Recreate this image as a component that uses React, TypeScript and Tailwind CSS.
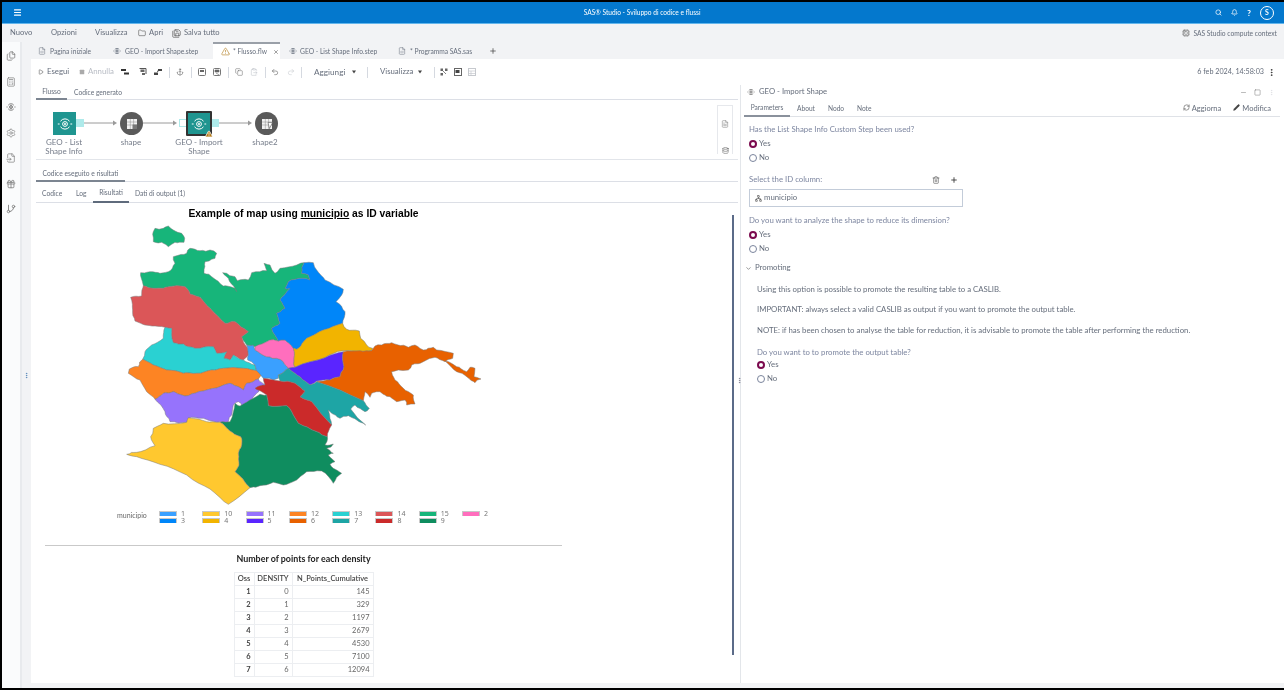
import React from "react";
import {
  Menu, Search, Bell, Folder, SaveAll, Cpu, Files, Calculator, Settings, FileInput, Gift, GitBranch,
  FileCode, TriangleAlert, X, Plus, Play, Square, Undo2, Redo2, ChevronDown, Copy, ClipboardPaste,
  Trash2, RefreshCw, Pencil, EllipsisVertical, Minus, Network, Anchor, FileText, Database,
} from "lucide-react";

const regions: { fill: string; pts: string }[] = [
  { fill: "#17B57A", pts: "128,88 135,70 160,70 175,63 190,75 215,85 224,100 222,112 195,112 175,125 155,112 130,110" },
  { fill: "#17B57A", pts: "92,203 120,200 150,205 175,200 195,175 190,155 230,145 240,130 270,137 300,135 320,145 315,160 285,170 282,205 305,215 340,243 375,250 380,260 375,250 355,220 338,203 350,205 375,215 382,227 415,225 425,203 470,197 462,175 480,180 495,205 510,190 560,180 582,173 575,205 595,210 600,225 575,220 535,230 525,250 540,250 510,285 525,310 500,325 510,355 485,370 505,408 480,405 435,425 410,420 395,395 415,380 375,350 345,355 300,310 270,277 240,267 225,245 200,242 160,250 130,250 100,242" },
  { fill: "#DB5658", pts: "100,242 95,273 62,277 68,315 75,348 105,360 135,363 165,367 185,370 190,413 220,417 255,430 310,425 320,445 350,440 342,460 360,465 370,450 380,455 400,465 415,450 413,430 395,395 415,380 375,350 345,355 300,310 270,277 240,267 225,245 200,242 160,250 130,250" },
  { fill: "#2AD1D2", pts: "185,370 190,413 220,417 255,430 310,425 320,445 350,440 342,460 360,465 370,450 400,465 435,480 440,497 400,490 340,490 305,495 260,505 220,505 170,495 130,480 98,463 105,440 125,420 160,400 165,367" },
  { fill: "#FD8423", pts: "98,463 130,480 170,495 220,505 260,505 305,495 340,490 400,490 440,497 458,507 445,522 410,535 400,555 385,545 360,535 330,545 280,558 235,572 215,570 190,560 160,565 135,583 110,560 90,525 55,505 58,492 85,485" },
  { fill: "#9673FC", pts: "135,583 160,565 190,560 215,570 235,572 280,558 330,545 360,535 385,545 400,555 410,535 445,522 465,540 450,548 440,565 415,595 395,603 385,590 370,600 365,630 355,650 320,652 280,640 235,640 230,652 180,650 165,620" },
  { fill: "#3AA0FF", pts: "410,420 430,420 435,435 470,455 500,460 520,470 535,490 505,510 505,520 490,525 460,520 440,497 435,480 413,465 415,450 413,430" },
  { fill: "#FF6EBD", pts: "435,425 480,405 505,408 525,405 550,430 552,470 555,487 535,490 520,470 500,460 470,455 435,435" },
  { fill: "#0086F9", pts: "582,173 610,173 620,195 645,225 700,253 695,270 678,290 705,320 698,355 640,375 590,400 565,430 550,430 525,405 505,408 485,370 510,355 500,325 525,310 510,285 540,250 525,250 535,230 575,220 600,225 595,210 575,205" },
  { fill: "#F2B400", pts: "698,355 710,373 748,378 752,400 770,420 788,430 785,437 700,437 645,458 555,487 552,470 550,430 565,430 590,400 640,375" },
  { fill: "#5A25FF", pts: "700,440 702,485 690,515 660,525 620,528 600,540 570,515 535,490 555,487 645,458" },
  { fill: "#E86100", pts: "700,440 750,437 785,437 795,423 815,420 845,413 865,420 895,427 915,420 940,435 970,427 980,435 1030,445 1028,460 1005,470 975,457 940,470 905,480 895,495 865,495 845,500 855,525 880,550 910,570 915,597 890,600 885,585 860,590 840,575 825,570 810,560 785,565 780,577 765,560 760,587 620,530 660,525 690,515 702,485" },
  { fill: "#E86100", pts: "1005,468 1040,485 1070,500 1080,487 1095,490 1092,515 1113,522 1095,533 1070,515 1040,500" },
  { fill: "#1EA5A5", pts: "505,510 535,490 570,515 600,540 620,530 760,587 778,610 765,620 735,600 722,612 767,660 740,645 715,632 690,640 665,625 655,615 665,660 605,590 570,575 585,558 555,535 510,528" },
  { fill: "#CB2A2A", pts: "435,550 465,540 460,520 510,528 555,535 585,558 570,575 605,590 665,660 652,695 620,680 565,655 545,620 530,602 475,602 470,570" },
  { fill: "#0F8D5F", pts: "330,652 360,650 375,595 390,603 430,580 450,568 470,570 475,602 530,602 545,620 565,655 620,680 652,695 645,720 670,717 650,730 670,745 655,750 675,770 660,778 670,790 695,805 670,835 635,798 590,800 560,825 520,840 490,832 450,842 420,848 375,800 387,780 385,745 395,720 392,695 360,678" },
  { fill: "#FFC82F", pts: "50,748 80,742 135,722 122,695 130,670 160,655 230,652 235,638 290,650 330,652 360,678 392,695 395,720 385,745 387,780 375,800 420,848 355,898 300,852 230,810 150,778 80,755" },
];

// Roughens the map outlines; the offset depends only on the edge, so neighbouring regions stay joined.
type P = [number, number];
function wobble(a: P, b: P, amp: number, depth: number): P[] {
  const len = Math.hypot(a[0] - b[0], a[1] - b[1]);
  if (depth === 0 || len < 14) return [];
  const sx = a[0] + b[0];
  const sy = a[1] + b[1];
  const h = Math.sin(sx * 12.9898 + sy * 78.233) * 43758.5453;
  const f = h - Math.floor(h);
  const h2 = Math.sin(sx * 39.346 + sy * 11.135) * 24634.6345;
  const g = h2 - Math.floor(h2);
  const m: P = [sx / 2 + (f - 0.5) * amp * 2, sy / 2 + (g - 0.5) * amp * 2];
  return [...wobble(a, m, amp * 0.6, depth - 1), m, ...wobble(m, b, amp * 0.6, depth - 1)];
}
function rough(pts: string): string {
  const p = pts.split(" ").map((s) => s.split(",").map(Number) as P);
  const out: P[] = [];
  p.forEach((a, i) => {
    const b = p[(i + 1) % p.length];
    out.push(a, ...wobble(a, b, 3, 2));
  });
  return out.map((q) => q.join(",")).join(" ");
}

const legend = [
  ["#3AA0FF", "1"], ["#FFC82F", "10"], ["#9673FC", "11"], ["#FD8423", "12"], ["#2AD1D2", "13"], ["#DB5658", "14"], ["#17B57A", "15"], ["#FF6EBD", "2"],
  ["#0086F9", "3"], ["#F2B400", "4"], ["#5A25FF", "5"], ["#E86100", "6"], ["#1EA5A5", "7"], ["#CB2A2A", "8"], ["#0F8D5F", "9"],
];

const rows = [[1, 0, 145], [2, 1, 329], [3, 2, 1197], [4, 3, 2679], [5, 4, 4530], [6, 5, 7100], [7, 6, 12094]];

function StepGlyph({ s = 16, w = 1, className = "" }: { s?: number; w?: number; className?: string }) {
  return (
    <svg width={s} height={s} viewBox="0 0 16 16" fill="none" stroke="currentColor" strokeWidth={w} className={`shrink-0 ${className}`}>
      <circle cx="8" cy="8" r="2.4" />
      <circle cx="8" cy="8" r="0.6" fill="currentColor" />
      <path d="M3.5 5.2A5.5 5.5 0 0 1 12.5 5.2M3.5 10.8A5.5 5.5 0 0 0 12.5 10.8" />
      <path d="M0.8 8H2.6M13.4 8H15.2" />
    </svg>
  );
}

function TableGlyph({ output = false }: { output?: boolean }) {
  return (
    <svg width="12" height="12" viewBox="0 0 12 12">
      <rect x="1" y="1" width="10" height="10" fill="#f2f2f2" />
      <path d="M1 4H11M1 7H11M4.3 1V11M7.6 1V11" stroke="#8a8a8a" strokeWidth="0.5" />
      {output ? <path d="M7 4.5L11.5 4.5L8.5 10.5Z" fill="white" stroke="#5a5a5a" strokeWidth="0.6" /> : <rect x="6.5" y="6.5" width="4.5" height="4.5" fill="#777" />}
    </svg>
  );
}

function Arrow({ w }: { w: number }) {
  return (
    <svg width={w} height="6" viewBox={`0 0 ${w} 6`} className="block">
      <path d={`M0 3H${w - 3}`} stroke="#9a9a9a" strokeWidth="1" />
      <path d={`M${w - 4} 0.5L${w} 3L${w - 4} 5.5Z`} fill="#9a9a9a" />
    </svg>
  );
}

function Radio({ on, label }: { on?: boolean; label: string }) {
  return (
    <div className="flex items-center gap-[2px] h-[14px] text-[7.8px] text-[#666e7c]">
      <span className={on ? "w-[8px] h-[8px] rounded-full border-[2.5px] border-[#7b0a4e] bg-white" : "w-[8px] h-[8px] rounded-full border border-[#7a849c] bg-white"} />
      <span>{label}</span>
    </div>
  );
}

function Sep({ m }: { m: string }) {
  return <span className={`block w-px h-[11px] bg-[#d5d9e0] shrink-0 ${m}`} />;
}

function Caret({ m }: { m: string }) {
  return (
    <svg width="6" height="4" viewBox="0 0 6 4" className={`shrink-0 ${m}`}>
      <path d="M1 0.5H5L3 3.5Z" fill="#444" />
    </svg>
  );
}

function Tb({ children, m }: { children: React.ReactNode; m: string }) {
  return (
    <svg width="8" height="8" viewBox="0 0 8 8" className={`shrink-0 ${m}`}>
      {children}
    </svg>
  );
}

function Tab({ icon, label, w, pl, gap, active }: { icon: React.ReactNode; label: string; w: number; pl: number; gap: number; active?: boolean }) {
  return (
    <div
      style={{ width: w, paddingLeft: pl, columnGap: gap }}
      className={active
        ? "flex items-center h-[17px] bg-white border-t-2 border-[#9aa0a8] text-[#666e7c] shrink-0"
        : "flex items-center h-[17px] pt-[1px] text-[#666e7c] shrink-0"}
    >
      {icon}
      <span className="whitespace-nowrap">{label}</span>
      {active && <X size={6} strokeWidth={2} className="ml-[3px] text-[#444]" />}
    </div>
  );
}

export default function App() {
  return (
    <div className="w-[1284px] h-[690px] overflow-hidden bg-black pt-[2px] pl-[2px] pb-[2px] flex flex-col font-['Lato','Noto_Sans',sans-serif] text-[7.8px] leading-none text-[#666e7c] blur-[0.4px]">
      {/* Header */}
      <header className="h-[22px] shrink-0 bg-[#0478cd] border-b border-[#63b6ec] flex items-center text-white">
        <Menu size={9} strokeWidth={3} className="ml-[11px]" />
        <div className="flex-1 text-center text-[6.6px] pl-[47px]">SAS® Studio - Sviluppo di codice e flussi</div>
        <div className="flex items-center">
          <Search size={7} strokeWidth={2.4} />
          <Bell size={7} strokeWidth={2.4} className="ml-[9px]" />
          <span className="ml-[9px] text-[8px] font-bold">?</span>
          <span className="ml-[9px] mr-[10px] w-[14px] h-[14px] rounded-full border border-white flex items-center justify-center text-[7px] font-bold">S</span>
        </div>
      </header>

      {/* Menu row */}
      <div className="h-[18px] shrink-0 bg-[#f2f3f5] flex items-center text-[7.6px] text-[#666e7c]">
        <span className="ml-[8px] w-[22px] shrink-0">Nuovo</span>
        <span className="ml-[19px] w-[26px] shrink-0">Opzioni</span>
        <span className="ml-[18px] w-[32px] shrink-0">Visualizza</span>
        <Folder size={8} strokeWidth={1.6} className="ml-[11px] text-[#444]" />
        <span className="ml-[3px] w-[15px] shrink-0">Apri</span>
        <SaveAll size={9} strokeWidth={1.6} className="ml-[8px] text-[#444]" />
        <span className="ml-[3px]">Salva tutto</span>
        <div className="ml-auto mr-[7px] flex items-center gap-[3px] text-[6.7px]">
          <Cpu size={8} strokeWidth={1.5} className="text-[#666]" />
          <span>SAS Studio compute context</span>
        </div>
      </div>

      {/* Body */}
      <div className="flex-1 flex min-h-0 bg-[#f2f3f5]">
        {/* Sidebar */}
        <aside className="w-[18px] shrink-0 bg-[#fafbfc] flex flex-col items-center pt-[9px] gap-[15.5px] text-[#777]">
          <Files size={10} strokeWidth={1.8} />
          <Calculator size={10} strokeWidth={1.6} />
          <StepGlyph s={10} w={1.5} />
          <Settings size={10} strokeWidth={1.5} />
          <FileInput size={10} strokeWidth={1.6} />
          <Gift size={10} strokeWidth={1.8} />
          <GitBranch size={10} strokeWidth={2} />
        </aside>
        <div className="w-[2px] shrink-0 bg-[#e8eaed]" />
        <div className="w-[9px] shrink-0 flex items-center justify-center pt-[20px]">
          <EllipsisVertical size={7} strokeWidth={2.4} className="text-[#4a7fb5]" />
        </div>

        {/* Main */}
        <div className="flex-1 min-w-0 flex flex-col pb-[5px]">
          {/* File tabs */}
          <div className="h-[17px] shrink-0 flex items-center text-[6.7px]">
            <Tab w={75} pl={7} gap={4} icon={<FileCode size={8} strokeWidth={1.5} />} label="Pagina iniziale" />
            <Tab w={107} pl={7} gap={4} icon={<StepGlyph s={8} w={1.6} />} label="GEO - Import Shape.step" />
            <Tab w={67} pl={8} gap={3} active icon={<TriangleAlert size={9} strokeWidth={1.6} className="text-[#b07a1a]" />} label="* Flusso.flw" />
            <Tab w={110} pl={9} gap={3} icon={<StepGlyph s={8} w={1.6} />} label="GEO - List Shape Info.step" />
            <Tab w={95} pl={8} gap={4} icon={<FileCode size={8} strokeWidth={1.5} />} label="* Programma SAS.sas" />
            <Plus size={8} strokeWidth={2.2} className="ml-[4px] text-[#444]" />
          </div>

          {/* White workspace */}
          <div className="flex-1 min-h-0 bg-white flex flex-col">
            {/* Toolbar */}
            <div className="h-[26px] shrink-0 flex items-center pl-[7px] text-[7.8px] whitespace-nowrap">
              <Play size={6} strokeWidth={2} className="text-[#444] shrink-0" />
              <span className="ml-[3px] w-[23px] shrink-0">Esegui</span>
              <Square size={6} fill="#aaa" strokeWidth={0} className="ml-[9px] shrink-0" />
              <span className="ml-[3px] w-[26px] shrink-0 text-[#b8bcc4]">Annulla</span>
              <Tb m="ml-[7px]"><path d="M0 1H5V3H0Z M3 4.5H8V6.5H3Z" fill="#333" /></Tb>
              <Tb m="ml-[10px]"><path d="M0.5 0.5H7V6" fill="none" stroke="#555" /><path d="M1.5 1.5H5.5V4H1.5Z M3 5H6V7H3Z" fill="#666" /></Tb>
              <Tb m="ml-[7px]"><path d="M4 1H8V3H4Z M0 4.5H4V7H0Z" fill="#444" /><path d="M3 3.5L5 2.5" stroke="#444" /></Tb>
              <Sep m="ml-[7px]" />
              <Anchor size={8} strokeWidth={1.6} className="ml-[6px] text-[#666] shrink-0" />
              <Sep m="ml-[7px]" />
              <Tb m="ml-[6px]"><rect x="0.5" y="0.5" width="7" height="7" rx="1" fill="none" stroke="#777" /><rect x="2" y="2" width="4" height="2" fill="#666" /></Tb>
              <Tb m="ml-[7px]"><rect x="0.5" y="0.5" width="7" height="7" rx="1" fill="none" stroke="#777" /><path d="M2 2H6V4H2Z M3 5L6.5 7" fill="#666" stroke="#666" strokeWidth="0.6" /></Tb>
              <Sep m="ml-[7px]" />
              <Copy size={8} strokeWidth={1.5} className="ml-[6px] text-[#666] shrink-0" />
              <ClipboardPaste size={8} strokeWidth={1.5} className="ml-[7px] text-[#b8bcc4] shrink-0" />
              <Sep m="ml-[7px]" />
              <Undo2 size={8} strokeWidth={1.6} className="ml-[5px] text-[#555] shrink-0" />
              <Redo2 size={8} strokeWidth={1.6} className="ml-[8px] text-[#c4c8ce] shrink-0" />
              <Sep m="ml-[6px]" />
              <span className="ml-[12px] w-[32px] shrink-0 text-[8.2px]">Aggiungi</span>
              <Caret m="ml-[5px]" />
              <Sep m="ml-[10px]" />
              <span className="ml-[12px] w-[32px] shrink-0">Visualizza</span>
              <Caret m="ml-[5px]" />
              <Sep m="ml-[11px]" />
              <Tb m="ml-[5px]"><path d="M0.5 0.5H3V3H0.5Z M5 0.5H7.5V3H5Z M0.5 5H3V7.5H0.5Z" fill="#666" /><path d="M3 3L6 6" stroke="#666" strokeWidth="0.8" /></Tb>
              <Tb m="ml-[6px]"><rect x="0.5" y="0.5" width="7" height="7" fill="none" stroke="#666" /><rect x="1.5" y="2" width="4" height="3" fill="#444" /></Tb>
              <Tb m="ml-[6px]"><rect x="0.5" y="0.5" width="7" height="7" fill="none" stroke="#c6c9ce" /><path d="M0.5 3H7.5M0.5 5.5H7.5M3 3V7.5" stroke="#c6c9ce" strokeWidth="0.7" /></Tb>
              <span className="ml-auto text-[7.2px]">6 feb 2024, 14:58:03</span>
              <EllipsisVertical size={9} strokeWidth={2.4} className="ml-[3px] mr-[8px] text-[#333]" />
            </div>

            <div className="flex-1 min-h-0 flex">
              {/* Left column */}
              <section className="w-[707px] shrink-0 pl-[5px] flex flex-col relative">
                <div className="h-[15px] shrink-0 flex border-b border-[#dcdfe6] text-[6.7px]">
                  <div className="w-[31px] h-[15px] border-b-2 border-[#7c8591] flex items-center justify-center">Flusso</div>
                  <div className="ml-[7px] flex items-center">Codice generato</div>
                </div>

                {/* Flow canvas */}
                <div className="relative h-[60px] shrink-0 border-b border-[#e2e5ea] text-[8px] text-[#767d8a]">
                  <div className="absolute left-[17px] top-[12px] w-[23px] h-[23px] bg-[#1f9590] flex items-center justify-center text-white"><StepGlyph /></div>
                  <div className="absolute left-[40px] top-[19px] w-[8px] h-[8px] bg-[#aeeaea]" />
                  <div className="absolute left-[48px] top-[20px]"><Arrow w={33} /></div>
                  <div className="absolute left-[84px] top-[12px] w-[23px] h-[23px] rounded-full bg-[#5a5a5a] flex items-center justify-center"><TableGlyph /></div>
                  <div className="absolute left-[107px] top-[20px]"><Arrow w={34} /></div>
                  <div className="absolute left-[143px] top-[19px] w-[8px] h-[8px] border border-[#aeeaea] bg-white" />
                  <div className="absolute left-[150px] top-[11px] w-[26px] h-[25px] bg-[#1f9590] border-2 border-[#333] flex items-center justify-center rounded-[1px] text-white"><StepGlyph /></div>
                  <TriangleAlert size={8} strokeWidth={2.4} fill="#b67a14" className="absolute left-[169px] top-[30px] text-white" />
                  <div className="absolute left-[176px] top-[19px] w-[7px] h-[8px] bg-[#aeeaea]" />
                  <div className="absolute left-[183px] top-[20px]"><Arrow w={33} /></div>
                  <div className="absolute left-[219px] top-[12px] w-[23px] h-[23px] rounded-full bg-[#5a5a5a] flex items-center justify-center"><TableGlyph output /></div>
                  <div className="absolute left-[3px] top-[38px] w-[50px] text-center leading-[9px]">GEO - List<br />Shape Info</div>
                  <div className="absolute left-[75px] top-[38px] w-[40px] text-center leading-[9px]">shape</div>
                  <div className="absolute left-[133px] top-[38px] w-[60px] text-center leading-[9px]">GEO - Import<br />Shape</div>
                  <div className="absolute left-[209px] top-[38px] w-[40px] text-center leading-[9px]">shape2</div>
                  <div className="absolute left-[681px] top-[5px] w-[16px] h-[49px] border border-[#e6e8ec] border-b-0 flex flex-col items-center justify-between pt-[14px]">
                    <FileText size={8} strokeWidth={1.5} className="text-[#777]" />
                    <Database size={7} strokeWidth={2} className="text-[#666]" />
                  </div>
                </div>

                {/* Result tabs */}
                <div className="h-[22px] shrink-0 flex border-b border-[#dcdfe6] text-[6.7px]">
                  <div className="w-[89px] h-[22px] border-b-2 border-[#7c8591] flex items-center justify-center pt-[6px]">Codice eseguito e risultati</div>
                </div>
                <div className="h-[21px] shrink-0 flex items-center border-b border-[#dcdfe6] text-[6.7px] pl-[6px]">
                  <span className="w-[21px] pt-[3px]">Codice</span>
                  <span className="ml-[13px] w-[11px] pt-[3px]">Log</span>
                  <div className="ml-[6px] w-[36px] h-[21px] border-b-2 border-[#5f6b7c] flex items-center justify-center pt-[3px]">Risultati</div>
                  <span className="ml-[6px] pt-[3px]">Dati di output (1)</span>
                </div>

                {/* Result body */}
                <div className="flex-1 min-h-0 ml-[9px] w-[517px] flex flex-col">
                  <div className="mt-[5px] h-[12px] flex items-center justify-center font-['Liberation_Sans',sans-serif] font-bold text-[10.3px] text-black whitespace-pre">
                    Example of map using <span className="underline">municipio</span> as ID variable
                  </div>
                  <svg width="390" height="285" viewBox="0 51 1170 855" className="ml-[65px] mt-[2px] shrink-0">
                    {regions.map((r, i) => (
                      <polygon key={i} points={rough(r.pts)} fill={r.fill} stroke="#7a7a7a" strokeWidth="1.5" strokeLinejoin="round" />
                    ))}
                  </svg>
                  <div className="mt-[4px] flex ml-[72px]">
                    <span className="w-[42px] text-[7px] pt-[1px] text-[#666]">municipio</span>
                    <div className="grid grid-cols-[repeat(8,43.3px)] gap-y-[2px] font-['Noto_Sans',sans-serif] text-[7px] text-[#777]">
                      {legend.map(([c, l]) => (
                        <div key={l} className="flex items-center h-[5px] gap-[4px]">
                          <span style={{ background: c }} className="w-[18px] h-[5px] border border-[#c8c8c8] border-b-0" />
                          <span>{l}</span>
                        </div>
                      ))}
                    </div>
                  </div>
                  <div className="mt-[22px] h-px bg-[#c9c9c9] shrink-0" />
                  <div className="mt-[9px] text-center font-bold text-[8.9px] text-[#222]">Number of points for each density</div>
                  <table className="mt-[8px] self-center border-collapse text-[7.5px] text-[#666]">
                    <thead>
                      <tr className="h-[13px] text-[#444]">
                        <th className="border border-[#eceef1] w-[20px] font-semibold px-[2px]">Oss</th>
                        <th className="border border-[#eceef1] w-[38px] font-semibold px-[2px]">DENSITY</th>
                        <th className="border border-[#eceef1] w-[81px] font-semibold px-[2px]">N_Points_Cumulative</th>
                      </tr>
                    </thead>
                    <tbody>
                      {rows.map((r) => (
                        <tr key={r[0]} className="h-[13px]">
                          <td className="border border-[#eceef1] text-right pr-[3px] font-bold text-[#444]">{r[0]}</td>
                          <td className="border border-[#eceef1] text-right pr-[3px]">{r[1]}</td>
                          <td className="border border-[#eceef1] text-right pr-[3px]">{r[2]}</td>
                        </tr>
                      ))}
                    </tbody>
                  </table>
                </div>
                <div className="absolute left-[701px] top-[130px] w-[2px] h-[440px] bg-[#5b6b88]" />
              </section>

              {/* Splitter */}
              <div className="w-[3px] shrink-0 border-r border-[#e3e6ea] flex items-center justify-center pb-[8px]">
                <EllipsisVertical size={7} strokeWidth={2.4} className="text-[#778] shrink-0" />
              </div>

              {/* Right panel */}
              <section className="flex-1 min-w-0 pl-[3px] pr-[4px] flex flex-col">
                <div className="h-[14px] shrink-0 flex items-center pl-[3px] text-[7.7px]">
                  <StepGlyph s={8} w={1.6} className="text-[#777]" />
                  <span className="ml-[4px]">GEO - Import Shape</span>
                  <Minus size={7} strokeWidth={1.5} className="ml-auto mr-[7px] text-[#666]" />
                  <Square size={7} strokeWidth={1.5} className="mr-[7px] text-[#666]" />
                  <EllipsisVertical size={7} strokeWidth={1.5} className="mr-[5px] text-[#d4d6da]" />
                </div>
                <div className="h-[18px] shrink-0 flex items-center border-b border-[#dfe2e7] text-[6.6px]">
                  <div className="w-[46px] h-[18px] border-b-2 border-[#8a919c] flex items-center justify-center pt-[2px]">Parameters</div>
                  <span className="ml-[7px] w-[18px] pt-[2px]">About</span>
                  <span className="ml-[13px] w-[16px] pt-[2px]">Nodo</span>
                  <span className="ml-[13px] pt-[2px]">Note</span>
                  <RefreshCw size={7} strokeWidth={2} className="ml-auto text-[#555]" />
                  <span className="ml-[2px] text-[7.5px] pt-[2px]">Aggiorna</span>
                  <Pencil size={7} fill="#444" strokeWidth={1.5} className="ml-[12px] text-[#444]" />
                  <span className="ml-[2px] mr-[9px] text-[7.5px] pt-[2px]">Modifica</span>
                </div>
                <div className="pl-[5px] text-[7.8px] text-[#7d86a0] flex flex-col">
                  <div className="mt-[9px] h-[9px]">Has the List Shape Info Custom Step been used?</div>
                  <div className="mt-[2px]"><Radio on label="Yes" /></div>
                  <Radio label="No" />
                  <div className="mt-[9px] w-[214px] h-[12px] flex items-center">
                    <span>Select the ID column:</span>
                    <Trash2 size={8} strokeWidth={1.8} className="ml-auto text-[#555]" />
                    <Plus size={8} strokeWidth={2.6} className="ml-[10px] mr-[5px] text-[#333]" />
                  </div>
                  <div className="mt-[3px] w-[214px] h-[18px] border border-[#c3ccd9] flex items-center pl-[5px] gap-[2px] text-[#666e7c]">
                    <Network size={7} strokeWidth={2} className="text-[#555]" />
                    <span>municipio</span>
                  </div>
                  <div className="mt-[10px] h-[9px]">Do you want to analyze the shape to reduce its dimension?</div>
                  <div className="mt-[2px]"><Radio on label="Yes" /></div>
                  <Radio label="No" />
                  <div className="mt-[7px] h-[10px] flex items-center text-[#666e7c] -ml-[4px]">
                    <ChevronDown size={7} strokeWidth={2} className="text-[#555]" />
                    <span className="ml-[3px]">Promoting</span>
                  </div>
                  <div className="pl-[8px] text-[#666e7c]">
                    <div className="mt-[13px]">Using this option is possible to promote the resulting table to a CASLIB.</div>
                    <div className="mt-[12.5px]">IMPORTANT: always select a valid CASLIB as output if you want to promote the output table.</div>
                    <div className="mt-[13px]">NOTE: if has been chosen to analyse the table for reduction, it is advisable to promote the table after performing the reduction.</div>
                    <div className="mt-[14px] text-[#7d86a0]">Do you want to to promote the output table?</div>
                    <div className="mt-[1px]"><Radio on label="Yes" /></div>
                    <Radio label="No" />
                  </div>
                </div>
              </section>
            </div>
          </div>
        </div>
      </div>
    </div>
  );
}
